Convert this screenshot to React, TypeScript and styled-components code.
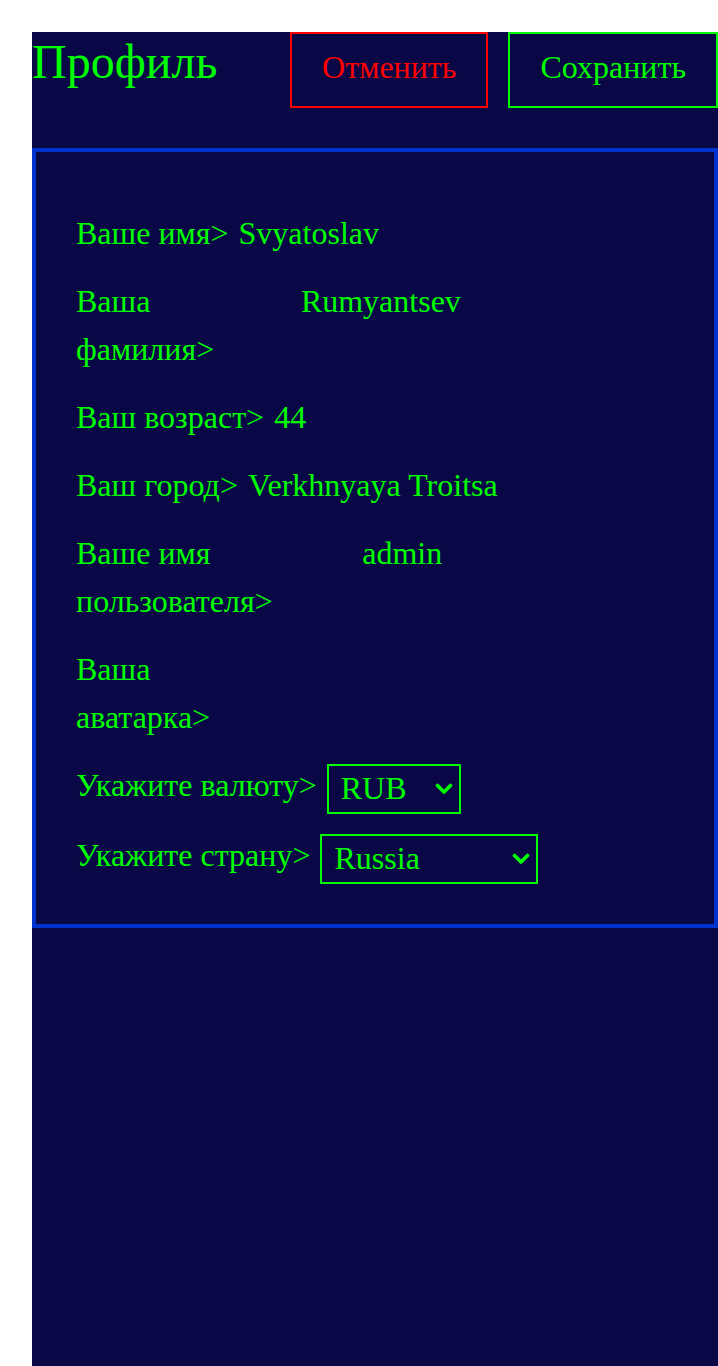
import React from 'react';
import styled, { createGlobalStyle } from 'styled-components';

const GlobalStyle = createGlobalStyle`
  html, body {
    margin: 0;
    padding: 0;
    background: #ffffff;
  }

  body {
    font-family: "Liberation Serif", "Times New Roman", serif;
    font-size: 32px;
    line-height: 1.5;
  }
`;

const fields = [
  { label: 'Ваше имя>', value: 'Svyatoslav' },
  { label: 'Ваша фамилия>', value: 'Rumyantsev' },
  { label: 'Ваш возраст>', value: '44' },
  { label: 'Ваш город>', value: 'Verkhnyaya Troitsa' },
  { label: 'Ваше имя пользователя>', value: 'admin' },
  { label: 'Ваша аватарка>', value: '' },
];

const Chevron = () => (
  <ChevronIcon width="18" height="12" viewBox="0 0 18 12" aria-hidden="true">
    <polyline
      points="2.5,2.5 9,9 15.5,2.5"
      fill="none"
      stroke="currentColor"
      strokeWidth="3.6"
      strokeLinecap="round"
      strokeLinejoin="round"
    />
  </ChevronIcon>
);

const App: React.FC = () => {
  return (
    <>
      <GlobalStyle />
      <Page>
        <Header>
          <Title>Профиль</Title>
          <Actions>
            <ActionButton $tone="cancel">Отменить</ActionButton>
            <ActionButton $tone="save">Сохранить</ActionButton>
          </Actions>
        </Header>

        <Panel>
          {fields.map((f) => (
            <FieldRow key={f.label}>
              <FieldLabel>{f.label}</FieldLabel>
              <FieldInput defaultValue={f.value} />
            </FieldRow>
          ))}

          <FieldRow>
            <FieldLabel>Укажите валюту&gt;</FieldLabel>
            <PickerWrap>
              <Picker $width={134} defaultValue="RUB">
                <option value="RUB">RUB</option>
                <option value="USD">USD</option>
                <option value="EUR">EUR</option>
              </Picker>
              <Chevron />
            </PickerWrap>
          </FieldRow>

          <FieldRow>
            <FieldLabel>Укажите страну&gt;</FieldLabel>
            <PickerWrap>
              <Picker $width={218} defaultValue="Russia">
                <option value="Russia">Russia</option>
                <option value="Belarus">Belarus</option>
                <option value="Kazakhstan">Kazakhstan</option>
              </Picker>
              <Chevron />
            </PickerWrap>
          </FieldRow>
        </Panel>
      </Page>
    </>
  );
};

const GREEN = '#00ff00';
const NAVY = '#0a0747';

const Page = styled.div`
  margin: 32px 0 0 32px;
  min-height: calc(100vh - 32px);
  background: ${NAVY};
  color: ${GREEN};
`;

const Header = styled.header`
  display: flex;
  justify-content: space-between;
  align-items: flex-start;
  margin-bottom: 40px;
`;

const Title = styled.h1`
  margin: 0;
  font-size: 48px;
  font-weight: 400;
  line-height: 60px;
`;

const Actions = styled.div`
  display: flex;
  gap: 20px;
`;

const ActionButton = styled.button<{ $tone: 'cancel' | 'save' }>`
  font-family: inherit;
  font-size: 32px;
  line-height: 1.5;
  padding: 9px 30px 15px;
  background: transparent;
  cursor: pointer;
  color: ${(p) => (p.$tone === 'cancel' ? '#ff0000' : GREEN)};
  border: 2px solid ${(p) => (p.$tone === 'cancel' ? '#ff0000' : GREEN)};
`;

const Panel = styled.section`
  display: flex;
  flex-direction: column;
  gap: 20px;
  padding: 60px 40px 40px;
  border: 4px solid #0033cc;
`;

const FieldRow = styled.div`
  display: flex;
  align-items: flex-start;
  gap: 10px;
`;

const FieldLabel = styled.label`
  flex: 0 1 auto;
  line-height: 48px;
  margin: -3px 0 3px;
`;

const FieldInput = styled.input`
  flex: 0 1 383px;
  min-width: 0;
  height: 48px;
  margin: -3px 0 3px;
  padding: 0;
  border: none;
  outline: none;
  background: transparent;
  color: ${GREEN};
  font-family: inherit;
  font-size: 32px;
  line-height: 48px;
`;

const PickerWrap = styled.div`
  position: relative;
  display: flex;
  color: ${GREEN};
`;

const Picker = styled.select<{ $width: number }>`
  appearance: none;
  -webkit-appearance: none;
  box-sizing: border-box;
  width: ${(p) => p.$width}px;
  height: 50px;
  padding: 0 30px 3px 12px;
  border: 2px solid ${GREEN};
  border-radius: 0;
  background: transparent;
  color: ${GREEN};
  font-family: inherit;
  font-size: 32px;
  cursor: pointer;

  option {
    background: ${NAVY};
    color: ${GREEN};
  }
`;

const ChevronIcon = styled.svg`
  position: absolute;
  right: 8px;
  top: 19px;
  pointer-events: none;
`;

export default App;
